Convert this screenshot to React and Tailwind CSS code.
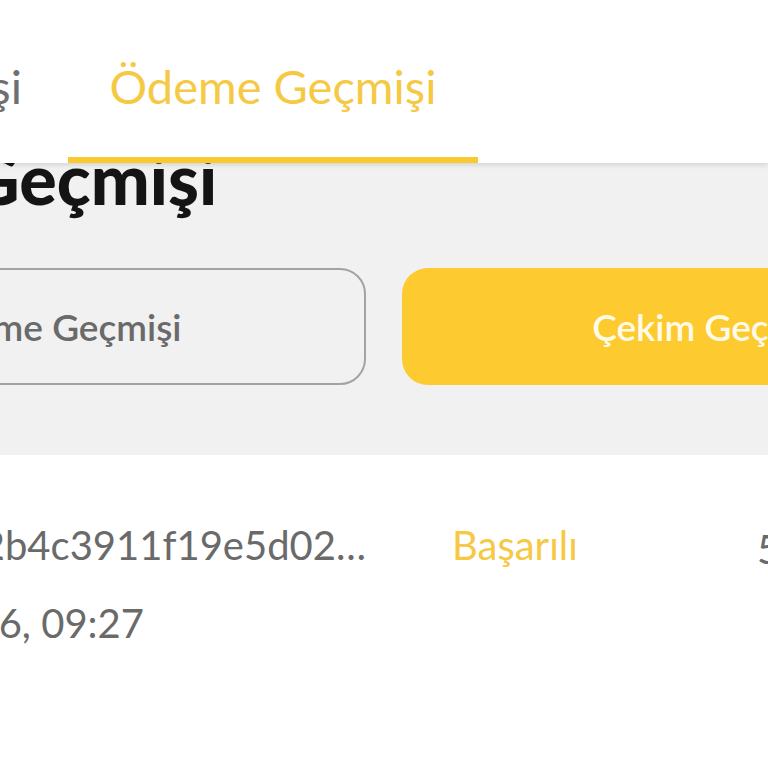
import React from 'react';

const font = { fontFamily: 'Lato, "Noto Sans", sans-serif' };

const App = () => {
  return (
    <div className="w-[768px] h-[768px] overflow-hidden bg-white relative" style={font}>
      {/* header tabs */}
      <div className="relative z-10 h-[163px] bg-white flex items-end shadow-[0_2px_5px_rgba(0,0,0,0.12)]">
        <div className="flex ml-[-342px]">
          <div className="w-[410px] h-[163px] flex items-center justify-end pr-[46px] pt-[10px]">
            <span className="text-[47px] text-[#707070] whitespace-nowrap">Çekim Geçmişi</span>
          </div>
          <div className="w-[410px] h-[163px] flex flex-col">
            <div className="flex-1 flex items-center justify-center pt-[16px]">
              <span className="text-[47px] text-[#f6c944] whitespace-nowrap">Ödeme Geçmişi</span>
            </div>
            <div className="h-[6px] bg-[#fbc92f]" />
          </div>
        </div>
      </div>

      {/* gray section */}
      <div className="bg-[#f1f1f1] h-[292px] overflow-hidden">
        <div className="mt-[-50px] ml-[-278px] h-[100px] flex items-end">
          <h1 className="text-[70px] font-black leading-none text-[#141414] whitespace-nowrap">Ödeme Geçmişi</h1>
        </div>
        <div className="flex gap-[36px] ml-[-256px] mt-[55px]">
          <button className="w-[622px] h-[117px] shrink-0 rounded-[26px] border-2 border-[#a3a3a3] flex items-center justify-center">
            <span className="text-[37px] font-semibold text-[#6a6a6a] whitespace-nowrap pr-[6px]">Ödeme Geçmişi</span>
          </button>
          <button className="w-[622px] h-[117px] shrink-0 rounded-[26px] bg-[#fdca30] flex items-center justify-center">
            <span className="text-[37px] font-semibold text-[#fffbe8] whitespace-nowrap">Çekim Geçmişi</span>
          </button>
        </div>
      </div>

      {/* row */}
      <div className="flex pt-[70px]">
        <div className="w-[366px] shrink-0 flex flex-col items-end">
          <div className="text-[40px] text-[#6a6a6a] whitespace-nowrap leading-none">0x7e2b4c3911f19e5d02…</div>
          <div className="text-[40px] text-[#6a6a6a] whitespace-nowrap leading-none mt-[38px] mr-[222px]">2024-03-26, 09:27</div>
        </div>
        <div className="ml-[86px] text-[40px] text-[#f6c944] leading-none">Başarılı</div>
        <div className="ml-[179px] text-[40px] text-[#6a6a6a] leading-none pt-[4px] whitespace-nowrap">500.00</div>
      </div>
    </div>
  );
};

export default App;
